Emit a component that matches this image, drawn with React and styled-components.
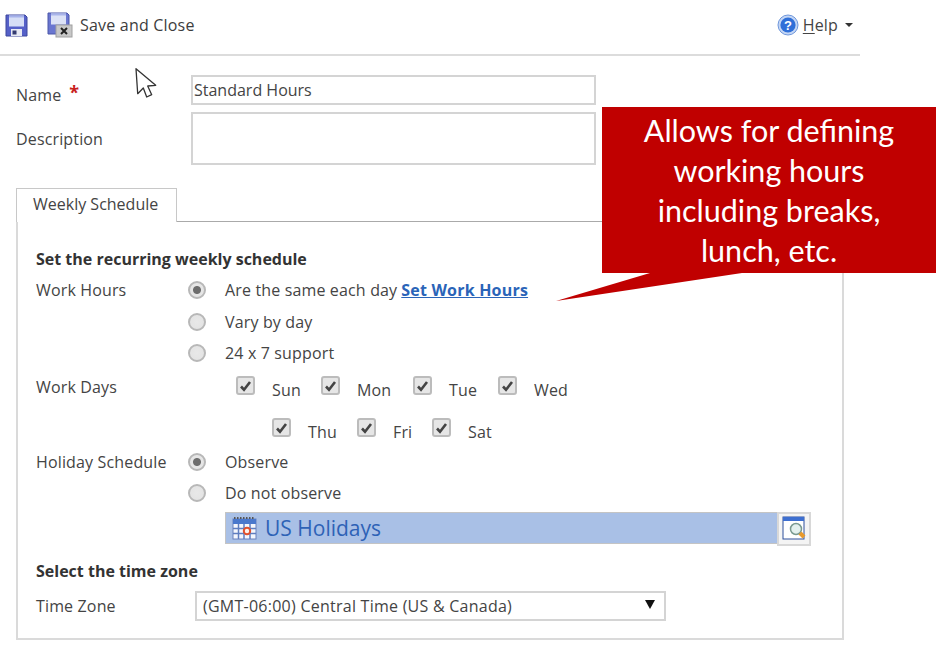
import styled, { createGlobalStyle } from "styled-components";

const GlobalStyle = createGlobalStyle`
  html, body { margin: 0; padding: 0; background: #fff; }
  body { font-family: "Open Sans", "Noto Sans", sans-serif; color: #444; overflow: hidden; }
`;

const Page = styled.div`
  position: relative;
  width: 936px;
  height: 648px;
  overflow: hidden;
  font-size: 16px;
  letter-spacing: 0.15px;
`;

const Toolbar = styled.div`
  width: 860px;
  height: 56px;
  border-bottom: 2px solid #dcdcdc;
  display: flex;
  align-items: center;
  padding: 0 7px 4px 5px;
  box-sizing: border-box;
`;

const ToolIcon = styled.span`
  display: flex;
  margin-right: ${(p) => p.$gap}px;
`;

const ToolText = styled.span`
  color: #3d3d3d;
  letter-spacing: 0.2px;
`;

const HelpLink = styled.span`
  margin-left: auto;
  display: flex;
  align-items: center;
  color: #444;
  gap: 4px;
  u { text-underline-offset: 2px; }
`;

const Caret = styled.span`
  width: 0;
  height: 0;
  margin-left: 3px;
  border-left: 4px solid transparent;
  border-right: 4px solid transparent;
  border-top: 4px solid #333;
`;

const Form = styled.div`
  padding: 19px 0 0 16px;
  width: 828px;
`;

const FieldRow = styled.div`
  display: flex;
  align-items: flex-start;
  margin-bottom: ${(p) => p.$mb || 0}px;
`;

const FieldLabel = styled.div`
  width: 175px;
  padding-top: ${(p) => p.$pt || 0}px;
  line-height: 20px;
`;

const Required = styled.span`
  color: #c8201c;
  margin-left: 8px;
  font-weight: 700;
  font-size: 18px;
  line-height: 16px;
  vertical-align: 2px;
`;

const TextBox = styled.div`
  width: 405px;
  height: ${(p) => p.$h}px;
  box-sizing: border-box;
  border: 2px solid #d4d4d4;
  padding-left: 1px;
  line-height: 26px;
  color: #444;
  letter-spacing: 0;
`;

const TabStrip = styled.div`
  display: flex;
  margin-top: 23px;
  height: 33px;
  position: relative;
  z-index: 1;
`;

const Tab = styled.div`
  width: 161px;
  height: 34px;
  box-sizing: border-box;
  border: 1px solid #c8c8c8;
  border-bottom: 0;
  background: #fff;
  padding: 4px 0 0 16px;
  line-height: 22px;
  letter-spacing: 0;
`;

const TabPanel = styled.div`
  height: 419px;
  box-sizing: border-box;
  border: 2px solid #dadada;
  border-top-color: #aaa;
  border-top-width: 1px;
  padding: 26px 18px 0 18px;
`;

const SectionTitle = styled.div`
  font-weight: 700;
  color: #333;
  line-height: 22px;
  letter-spacing: 0;
  margin-top: ${(p) => p.$mt || 0}px;
`;

const OptionGrid = styled.div`
  display: grid;
  grid-template-columns: 152px 1fr;
  margin-top: ${(p) => p.$mt || 0}px;
`;

const RowLabel = styled.div`
  line-height: 22px;
`;

const RadioList = styled.div`
  display: flex;
  flex-direction: column;
  gap: ${(p) => p.$gap || 9}px;
`;

const RadioRow = styled.div`
  display: flex;
  align-items: center;
  height: 22px;
  line-height: 22px;
`;

const RadioDot = styled.span`
  width: 18px;
  height: 18px;
  box-sizing: border-box;
  border-radius: 50%;
  margin-right: 19px;
  border: 2px solid #b8b8b8;
  background: radial-gradient(circle, ${(p) => (p.$on ? "#6d6d6d 0 3.5px, #e6e6e6 4.5px" : "#e8e8e8 0, #e2e2e2 100%")});
  flex: none;
`;

const ActionLink = styled.a`
  color: #2a64b8;
  font-weight: 700;
  text-decoration: underline;
  margin-left: 4px;
  letter-spacing: 0.2px;
`;

const DayRow = styled.div`
  display: flex;
  height: 42px;
  padding-left: ${(p) => p.$indent}px;
`;

const Day = styled.div`
  display: flex;
  width: ${(p) => p.$w}px;
  flex: none;
`;

const CheckBox = styled.span`
  width: 19px;
  height: 19px;
  box-sizing: border-box;
  border: 2px solid #bcbcbc;
  border-radius: 3px;
  background: #e6e6e6;
  display: flex;
  align-items: center;
  justify-content: center;
  flex: none;
`;

const DayName = styled.span`
  margin: 3px 0 0 17px;
  line-height: 22px;
`;

const LookupRow = styled.div`
  display: flex;
  height: 32px;
  margin: 8px 0 0 37px;
  width: 586px;
`;

const LookupValue = styled.div`
  flex: 1;
  height: 32px;
  box-sizing: border-box;
  background: #a9c0e6;
  border: 1px solid #c4c4c4;
  border-right: 0;
  display: flex;
  align-items: center;
  gap: 8px;
  color: #2e62b6;
  font-size: 21px;
  letter-spacing: 0;
  padding-left: 6px;
`;

const LookupButton = styled.div`
  width: 34px;
  height: 34px;
  box-sizing: border-box;
  border: 2px solid #d8d8d8;
  background: #f4f4f4;
  display: flex;
  align-items: center;
  justify-content: center;
`;

const SelectRow = styled.div`
  display: grid;
  grid-template-columns: 159px 471px;
  align-items: center;
  margin-top: 9px;
`;

const SelectBox = styled.div`
  height: 30px;
  box-sizing: border-box;
  border: 2px solid #d4d4d4;
  display: flex;
  align-items: center;
  justify-content: space-between;
  padding: 0 9px 0 6px;
  color: #444;
  letter-spacing: 0.25px;
`;

const SelectArrow = styled.span`
  width: 0;
  height: 0;
  border-left: 5px solid transparent;
  border-right: 5px solid transparent;
  border-top: 9px solid #111;
  margin-top: -3px;
`;

const Callout = styled.div`
  position: absolute;
  left: 602px;
  top: 107px;
  width: 334px;
  height: 166px;
  background: #c00000;
  color: #fff;
  font-family: "Lato", "Carlito", sans-serif;
  font-size: 30.5px;
  letter-spacing: 0;
  line-height: 40px;
  text-align: center;
  padding-top: 3px;
  box-sizing: border-box;
`;

const CalloutTail = styled.svg`
  position: absolute;
  left: 552px;
  top: 272px;
`;

const Pointer = styled.svg`
  position: absolute;
  left: 135px;
  top: 68px;
`;

const FloppyIcon = () => (
  <svg width="23" height="23" viewBox="0 0 23 23">
    <path d="M1 1h19l2 2v19H1z" fill="#5560c8" stroke="#3d469c" />
    <rect x="4" y="1.5" width="15" height="11" fill="#d6def6" />
    <rect x="4" y="1.5" width="15" height="2" fill="#a6b2ea" />
    <rect x="6" y="15" width="11" height="7" fill="#e8eaf4" />
    <rect x="7.5" y="16.5" width="4" height="4" fill="#333a70" />
  </svg>
);

const SaveCloseIcon = () => (
  <svg width="26" height="26" viewBox="0 0 26 26">
    <path d="M1 1h19l2 2v19H1z" fill="#6a76d0" stroke="#4a56a8" />
    <rect x="4" y="1.5" width="15" height="11" fill="#dce2f6" />
    <rect x="4" y="1.5" width="15" height="2" fill="#aab5ea" />
    <rect x="9" y="13" width="16" height="12" fill="#c8c8c8" stroke="#a0a0a0" />
    <path d="M14 16l6 6M20 16l-6 6" stroke="#222" strokeWidth="2" />
  </svg>
);

const HelpIcon = () => (
  <svg width="22" height="22" viewBox="0 0 22 22">
    <circle cx="11" cy="11" r="10" fill="#c4d6f4" stroke="#6f97dc" />
    <circle cx="11" cy="11" r="7.6" fill="#2f6fd8" />
    <text x="11" y="15.5" textAnchor="middle" fontSize="13" fontWeight="700" fill="#fff" fontFamily="Liberation Sans">?</text>
  </svg>
);

const Tick = () => (
  <svg width="13" height="12" viewBox="0 0 13 12">
    <path d="M2 6.5l3 3.2L11 2" fill="none" stroke="#444" strokeWidth="2.6" />
  </svg>
);

const CalendarIcon = () => (
  <svg width="25" height="24" viewBox="0 0 25 24">
    <rect x="1" y="3" width="23" height="20" fill="#f4f7fd" stroke="#6c82bc" />
    <rect x="1" y="3" width="23" height="5" fill="#4a78cc" />
    <path d="M1 12.5h23M1 17.5h23M6.5 8v15M12 8v15M18 8v15" stroke="#5f7ec0" strokeWidth="1.5" />
    <circle cx="15" cy="15" r="3.2" fill="#fdf1ea" stroke="#e2512c" strokeWidth="2" />
    <path d="M2 2h21" stroke="#555" strokeWidth="2" strokeDasharray="1.5 1.5" />
  </svg>
);

const LookupIcon = () => (
  <svg width="24" height="26" viewBox="0 0 24 26">
    <rect x="1" y="1" width="21" height="22" fill="#fff" stroke="#2c4f9c" />
    <rect x="1" y="1" width="21" height="4" fill="#3d6fd0" />
    <circle cx="14" cy="13" r="5.5" fill="#e4f1ee" stroke="#7a9a90" strokeWidth="1.5" />
    <path d="M18 17l4 4" stroke="#e89a2c" strokeWidth="4" />
  </svg>
);

const days1 = [["Sun", 85], ["Mon", 92], ["Tue", 85], ["Wed", 80]];
const days2 = [["Thu", 85], ["Fri", 75], ["Sat", 70]];

const App = () => (
  <Page>
    <GlobalStyle />
    <Toolbar>
      <ToolIcon $gap={19}><FloppyIcon /></ToolIcon>
      <ToolIcon $gap={7}><SaveCloseIcon /></ToolIcon>
      <ToolText>Save and Close</ToolText>
      <HelpLink>
        <HelpIcon />
        <span><u>H</u>elp</span>
        <Caret />
      </HelpLink>
    </Toolbar>

    <Form>
      <FieldRow $mb={7}>
        <FieldLabel $pt={9}>Name<Required>*</Required></FieldLabel>
        <TextBox $h={30}>Standard Hours</TextBox>
      </FieldRow>
      <FieldRow>
        <FieldLabel $pt={17}>Description</FieldLabel>
        <TextBox $h={53} />
      </FieldRow>

      <TabStrip><Tab>Weekly Schedule</Tab></TabStrip>
      <TabPanel>
        <SectionTitle>Set the recurring weekly schedule</SectionTitle>
        <OptionGrid $mt={9}>
          <RowLabel>Work Hours</RowLabel>
          <RadioList $gap={9.5}>
            <RadioRow><RadioDot $on />Are the same each day<ActionLink>Set Work Hours</ActionLink></RadioRow>
            <RadioRow><RadioDot />Vary by day</RadioRow>
            <RadioRow><RadioDot />24 x 7 support</RadioRow>
          </RadioList>
        </OptionGrid>
        <OptionGrid $mt={12}>
          <RowLabel>Work Days</RowLabel>
          <div>
            <DayRow $indent={48}>
              {days1.map(([d, w]) => (
                <Day key={d} $w={w}><CheckBox><Tick /></CheckBox><DayName>{d}</DayName></Day>
              ))}
            </DayRow>
            <DayRow $indent={84}>
              {days2.map(([d, w]) => (
                <Day key={d} $w={w}><CheckBox><Tick /></CheckBox><DayName>{d}</DayName></Day>
              ))}
            </DayRow>
          </div>
        </OptionGrid>
        <OptionGrid $mt={-9}>
          <RowLabel>Holiday Schedule</RowLabel>
          <RadioList>
            <RadioRow><RadioDot $on />Observe</RadioRow>
            <RadioRow><RadioDot />Do not observe</RadioRow>
          </RadioList>
          <span />
          <LookupRow>
            <LookupValue><CalendarIcon />US Holidays</LookupValue>
            <LookupButton><LookupIcon /></LookupButton>
          </LookupRow>
        </OptionGrid>
        <SectionTitle $mt={16}>Select the time zone</SectionTitle>
        <SelectRow>
          <RowLabel>Time Zone</RowLabel>
          <SelectBox>
            (GMT-06:00) Central Time (US &amp; Canada)
            <SelectArrow />
          </SelectBox>
        </SelectRow>
      </TabPanel>
    </Form>

    <Pointer width="22" height="32" viewBox="0 0 22 32">
      <path d="M1 .7L2.7 25.7 8.3 20 11.7 29 16.7 26.7 12.7 18 20.7 17.3z" fill="#fff" stroke="#333" strokeWidth="1.3" strokeLinejoin="round" />
    </Pointer>
    <Callout>
      Allows for defining<br />working hours<br />including breaks,<br />lunch, etc.
    </Callout>
    <CalloutTail width="200" height="32" viewBox="0 0 200 32">
      <path d="M98 1L4 29 190 1z" fill="#c00000" />
    </CalloutTail>
  </Page>
);

export default App;
